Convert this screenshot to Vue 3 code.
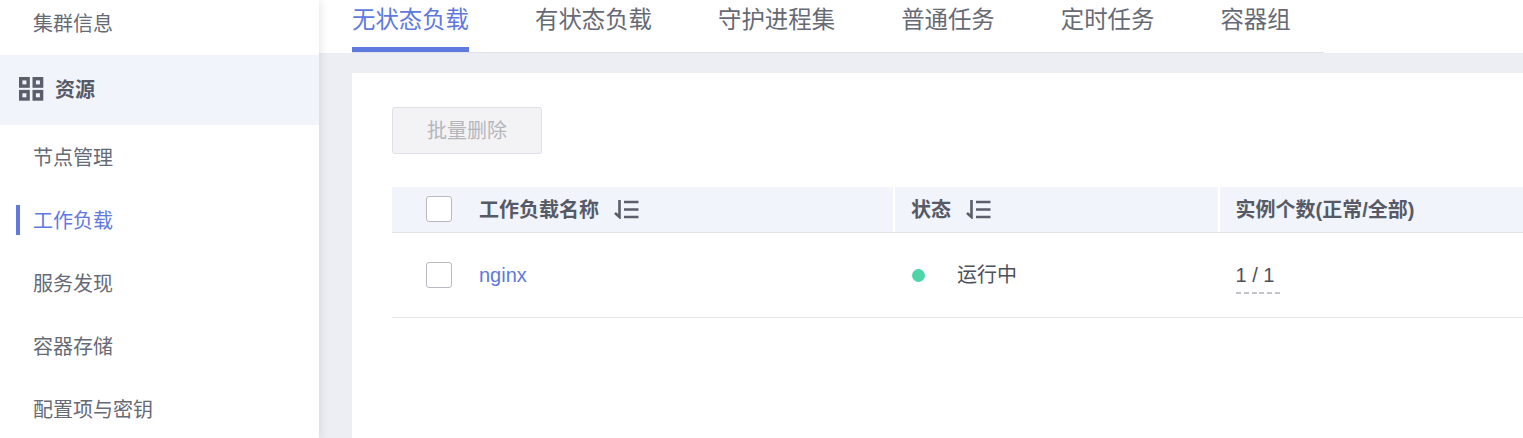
<template>
  <div class="page">
    <aside class="sidebar">
      <div class="sidebar__item sidebar__item--first">集群信息</div>
      <div class="sidebar__group">
        <svg class="sidebar__group-icon" width="25" height="24" viewBox="0 0 25 24" fill="none" stroke="#5b5e6b" stroke-width="3.4">
          <rect x="1.7" y="1.7" width="7.4" height="7.4" />
          <rect x="15.2" y="1.7" width="7.4" height="7.4" />
          <rect x="1.7" y="14.6" width="7.4" height="7.4" />
          <rect x="15.2" y="14.6" width="7.4" height="7.4" />
        </svg>
        <span>资源</span>
      </div>
      <div
        v-for="item in menuItems"
        :key="item"
        class="sidebar__item"
        :class="{ 'sidebar__item--active': item === activeMenu }"
      >
        {{ item }}
      </div>
    </aside>

    <main class="content">
      <header class="tabs-bar">
        <nav class="tabs">
          <div
            v-for="tab in tabs"
            :key="tab"
            class="tabs__item"
            :class="{ 'tabs__item--active': tab === activeTab }"
          >
            {{ tab }}
          </div>
        </nav>
      </header>

      <section class="card">
        <button type="button" class="delete-btn" disabled>批量删除</button>

        <div class="table">
          <div class="table__head">
            <div class="table__cell table__cell--name">
              <span class="checkbox"></span>
              <span>工作负载名称</span>
              <svg class="sort-icon" width="27" height="20" viewBox="0 0 27 20" fill="none" stroke="#5b5e6b" stroke-width="2.6">
                <path d="M7.5 1V18L3 14" />
                <path d="M12 3H26.5M12 10.5H26.5M12 18H26.5" />
              </svg>
            </div>
            <div class="table__cell">
              <span>状态</span>
              <svg class="sort-icon" width="27" height="20" viewBox="0 0 27 20" fill="none" stroke="#5b5e6b" stroke-width="2.6">
                <path d="M7.5 1V18L3 14" />
                <path d="M12 3H26.5M12 10.5H26.5M12 18H26.5" />
              </svg>
            </div>
            <div class="table__cell">实例个数(正常/全部)</div>
          </div>

          <div v-for="row in rows" :key="row.name" class="table__row">
            <div class="table__cell table__cell--name">
              <span class="checkbox"></span>
              <span class="link">{{ row.name }}</span>
            </div>
            <div class="table__cell table__cell--status">
              <span class="status-dot"></span>
              <span class="status-text">{{ row.status }}</span>
            </div>
            <div class="table__cell">
              <span class="count">{{ row.count }}</span>
            </div>
          </div>
        </div>
      </section>
    </main>
  </div>
</template>

<script setup>
const menuItems = ['节点管理', '工作负载', '服务发现', '容器存储', '配置项与密钥']
const activeMenu = '工作负载'

const tabs = ['无状态负载', '有状态负载', '守护进程集', '普通任务', '定时任务', '容器组']
const activeTab = '无状态负载'

const rows = [{ name: 'nginx', status: '运行中', count: '1 / 1' }]
</script>

<style>
html,
body {
  margin: 0;
  overflow: hidden;
}
</style>

<style scoped>
.page {
  display: flex;
  width: 1523px;
  height: 438px;
  overflow: hidden;
  background: #edeef3;
  font-family: "Liberation Sans", "Noto Sans CJK SC", sans-serif;
  font-size: 20px;
  color: #666a75;
}

.sidebar {
  position: relative;
  z-index: 2;
  flex: none;
  width: 319px;
  background: #fff;
  box-shadow: 2px 0 8px rgba(120, 125, 145, 0.18);
}

.sidebar__item {
  display: flex;
  align-items: center;
  height: 63px;
  padding-left: 33px;
  box-sizing: border-box;
}

.sidebar__item--first {
  height: 55px;
  padding-bottom: 10px;
}

.sidebar__item--active {
  color: #5f79de;
  background: linear-gradient(#5f79de, #5f79de) 16px center / 4px 30px no-repeat;
}

.sidebar__group {
  display: flex;
  align-items: center;
  height: 70px;
  box-sizing: border-box;
  padding: 0 0 3px 19px;
  background: #f1f4fb;
  font-weight: 700;
  color: #565a66;
}

.sidebar__group-icon {
  margin-right: 11px;
}

.content {
  flex: 1;
  min-width: 0;
  display: flex;
  flex-direction: column;
  gap: 20px;
}

.tabs-bar {
  flex: none;
  height: 53px;
  background: #fff;
  padding-left: 33px;
}

.tabs {
  display: flex;
  gap: 66.1px;
  width: fit-content;
  height: 53px;
  box-sizing: border-box;
  padding-right: 33px;
  border-bottom: 1px solid #e0e2e8;
}

.tabs__item {
  height: 52px;
  box-sizing: border-box;
  padding-top: 3px;
  font-size: 23.4px;
  line-height: 34px;
}

.tabs__item--active {
  color: #5f79de;
  border-bottom: 5px solid #5f79de;
}

.card {
  flex: 1;
  margin-left: 33px;
  padding: 34px 0 0 40px;
  background: #fff;
}

.delete-btn {
  display: block;
  width: 150px;
  height: 47px;
  padding: 0 0 2px;
  border: 1.5px solid #e0e1e6;
  border-radius: 3px;
  background: #f3f3f5;
  color: #b5b6bc;
  font: inherit;
}

.table {
  margin-top: 33px;
}

.table__head,
.table__row {
  display: grid;
  grid-template-columns: 501px 324.5px 1fr;
  box-sizing: border-box;
}

.table__head {
  height: 46px;
  border-bottom: 1.5px solid #e0e2e8;
  background: #f1f4fb;
  font-weight: 700;
  color: #565a66;
}

.table__head .table__cell {
  padding-bottom: 2px;
}

.table__head .table__cell + .table__cell {
  border-left: 2px solid #fff;
}

.table__row {
  height: 85px;
  border-bottom: 1.5px solid #e4e5ea;
  color: #4d505b;
}

.table__cell {
  display: flex;
  align-items: center;
  min-width: 0;
  box-sizing: border-box;
  padding-left: 16px;
  white-space: nowrap;
}

.table__row .table__cell {
  padding-left: 18px;
}

.table__row .table__cell--status {
  padding-left: 19px;
}

.table__head .table__cell--name,
.table__row .table__cell--name {
  padding-left: 34px;
}

.checkbox {
  flex: none;
  width: 26px;
  height: 26px;
  margin-right: 27px;
  box-sizing: border-box;
  border: 1.7px solid #b8b9c1;
  border-radius: 3px;
  background: #fff;
}

.sort-icon {
  margin-left: 13px;
}

.link {
  color: #5f79de;
}

.status-dot {
  flex: none;
  width: 13px;
  height: 13px;
  margin-right: 32px;
  border-radius: 50%;
  background: #4fd4a8;
}

.status-text {
  padding-bottom: 3px;
}

.count {
  display: inline-block;
  min-width: 44px;
  margin-top: 6px;
  padding-bottom: 7px;
  background: repeating-linear-gradient(90deg, #c4c5ca 0 5px, transparent 5px 7.8px) left bottom / 100% 2px no-repeat;
  line-height: 24px;
}
</style>
